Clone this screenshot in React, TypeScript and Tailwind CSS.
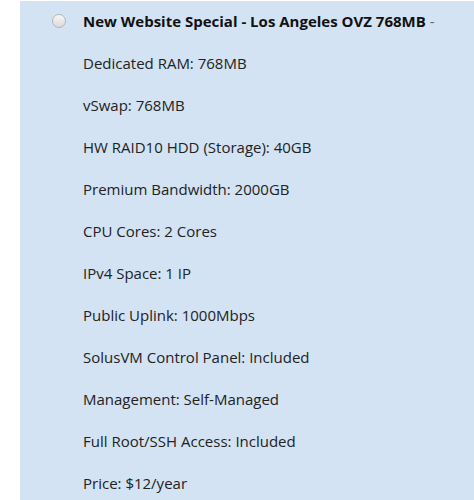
const specs = [
  'Dedicated RAM: 768MB',
  'vSwap: 768MB',
  'HW RAID10 HDD (Storage): 40GB',
  'Premium Bandwidth: 2000GB',
  'CPU Cores: 2 Cores',
  'IPv4 Space: 1 IP',
  'Public Uplink: 1000Mbps',
  'SolusVM Control Panel: Included',
  'Management: Self-Managed',
  'Full Root/SSH Access: Included',
  'Price: $12/year',
];

export default function App() {
  return (
    <div className="h-[500px] w-[474px] overflow-hidden bg-white pl-5 pt-px font-['Open_Sans',sans-serif] text-[15px] text-[#222]">
      <div className="h-full bg-[#d3e3f3] pl-[32px] pt-[10px]">
        <label className="flex items-center gap-[17px]">
          {/* old-style grey radio */}
          <input
            type="radio"
            name="plan"
            className="m-0 h-[14px] w-[14px] shrink-0 appearance-none rounded-full border border-[#b4b4b4] bg-gradient-to-b from-[#f7f7f7] to-[#dadada]"
          />
          <span className="leading-[20px]">
            <b className="font-bold text-[#111]">New Website Special - Los Angeles OVZ 768MB</b>{' '}
            <span className="text-[#666]">-</span>
          </span>
        </label>
        <ul className="mt-[22px] flex flex-col gap-[22px] pl-[31px]">
          {specs.map((s) => (
            <li key={s} className="leading-[20px]">
              {s}
            </li>
          ))}
        </ul>
      </div>
    </div>
  );
}
